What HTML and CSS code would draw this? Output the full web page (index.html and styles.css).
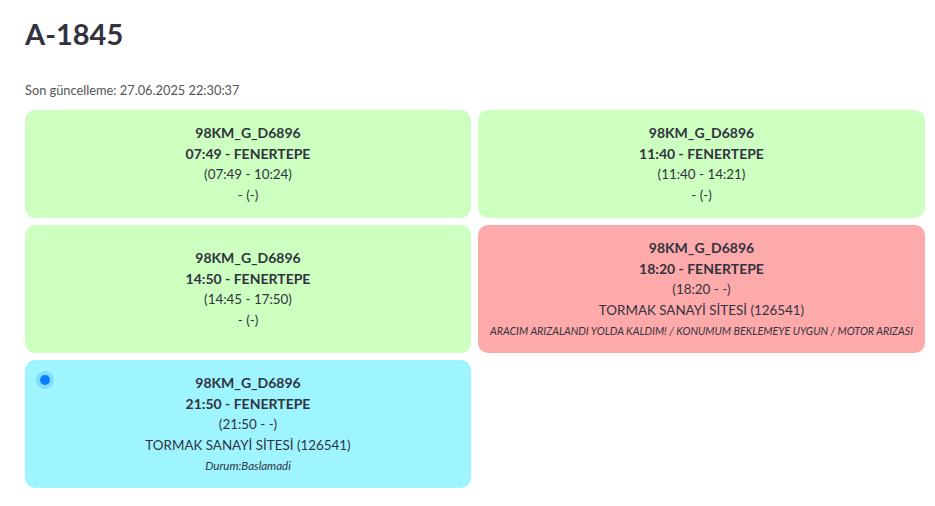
FILE: index.html
```html
<!DOCTYPE html>
<html lang="tr">
<head>
<meta charset="utf-8">
<title>A-1845</title>
<link rel="stylesheet" href="styles.css">
</head>
<body>
<main class="page">
  <h1 class="title">A-1845</h1>
  <p class="updated">Son güncelleme: 27.06.2025 22:30:37</p>
  <div class="grid">
    <div class="card green">
      <div class="bold">98KM_G_D6896</div>
      <div class="bold">07:49 - FENERTEPE</div>
      <div class="line">(07:49 - 10:24)</div>
      <div class="line">- (-)</div>
    </div>
    <div class="card green">
      <div class="bold">98KM_G_D6896</div>
      <div class="bold">11:40 - FENERTEPE</div>
      <div class="line">(11:40 - 14:21)</div>
      <div class="line">- (-)</div>
    </div>
    <div class="card green">
      <div class="bold">98KM_G_D6896</div>
      <div class="bold">14:50 - FENERTEPE</div>
      <div class="line">(14:45 - 17:50)</div>
      <div class="line">- (-)</div>
    </div>
    <div class="card red">
      <div class="bold">98KM_G_D6896</div>
      <div class="bold">18:20 - FENERTEPE</div>
      <div class="line">(18:20 - -)</div>
      <div class="line">TORMAK SANAYİ SİTESİ (126541)</div>
      <div class="note">ARACIM ARIZALANDI YOLDA KALDIM! / KONUMUM BEKLEMEYE UYGUN / MOTOR ARIZASI</div>
    </div>
    <div class="card blue">
      <span class="dot"></span>
      <div class="bold">98KM_G_D6896</div>
      <div class="bold">21:50 - FENERTEPE</div>
      <div class="line">(21:50 - -)</div>
      <div class="line">TORMAK SANAYİ SİTESİ (126541)</div>
      <div class="note note-lg">Durum:Baslamadi</div>
    </div>
  </div>
</main>
</body>
</html>
```
FILE: styles.css
```css
* { box-sizing: border-box; }
html, body {
  margin: 0;
  padding: 0;
  background: #ffffff;
}
body {
  font-family: "Lato", "Open Sans", "Liberation Sans", sans-serif;
  color: #31333f;
}
.page {
  padding: 14px 10px 0 25px;
}
.title {
  margin: 0;
  font-size: 29px;
  font-weight: 700;
  line-height: 40px;
  color: #31333f;
}
.updated {
  margin: 27px 0 0 0;
  font-size: 12.8px;
  line-height: 18px;
  color: #555555;
}
.grid {
  margin-top: 11px;
  display: grid;
  grid-template-columns: 446px 447px;
  column-gap: 7px;
  row-gap: 7px;
}
.card {
  position: relative;
  border-radius: 10px;
  padding: 12px 8px;
  display: flex;
  flex-direction: column;
  justify-content: center;
  align-items: center;
  text-align: center;
}
.green { background: #ccffc0; }
.red { background: #ffaaaa; }
.blue { background: #9ff5ff; }
.bold {
  font-size: 14px;
  font-weight: 700;
  line-height: 21px;
}
.line {
  font-size: 13.4px;
  line-height: 21px;
}
.note {
  font-size: 10.7px;
  font-style: italic;
  line-height: 20px;
  white-space: nowrap;
}
.note-lg {
  font-size: 11.5px;
}
.dot {
  position: absolute;
  left: 11px;
  top: 11px;
  width: 18px;
  height: 18px;
  border-radius: 50%;
  background: #80deff;
}
.dot::after {
  content: "";
  position: absolute;
  left: 4px;
  top: 4px;
  width: 10px;
  height: 10px;
  border-radius: 50%;
  background: #0a7cff;
}
```
